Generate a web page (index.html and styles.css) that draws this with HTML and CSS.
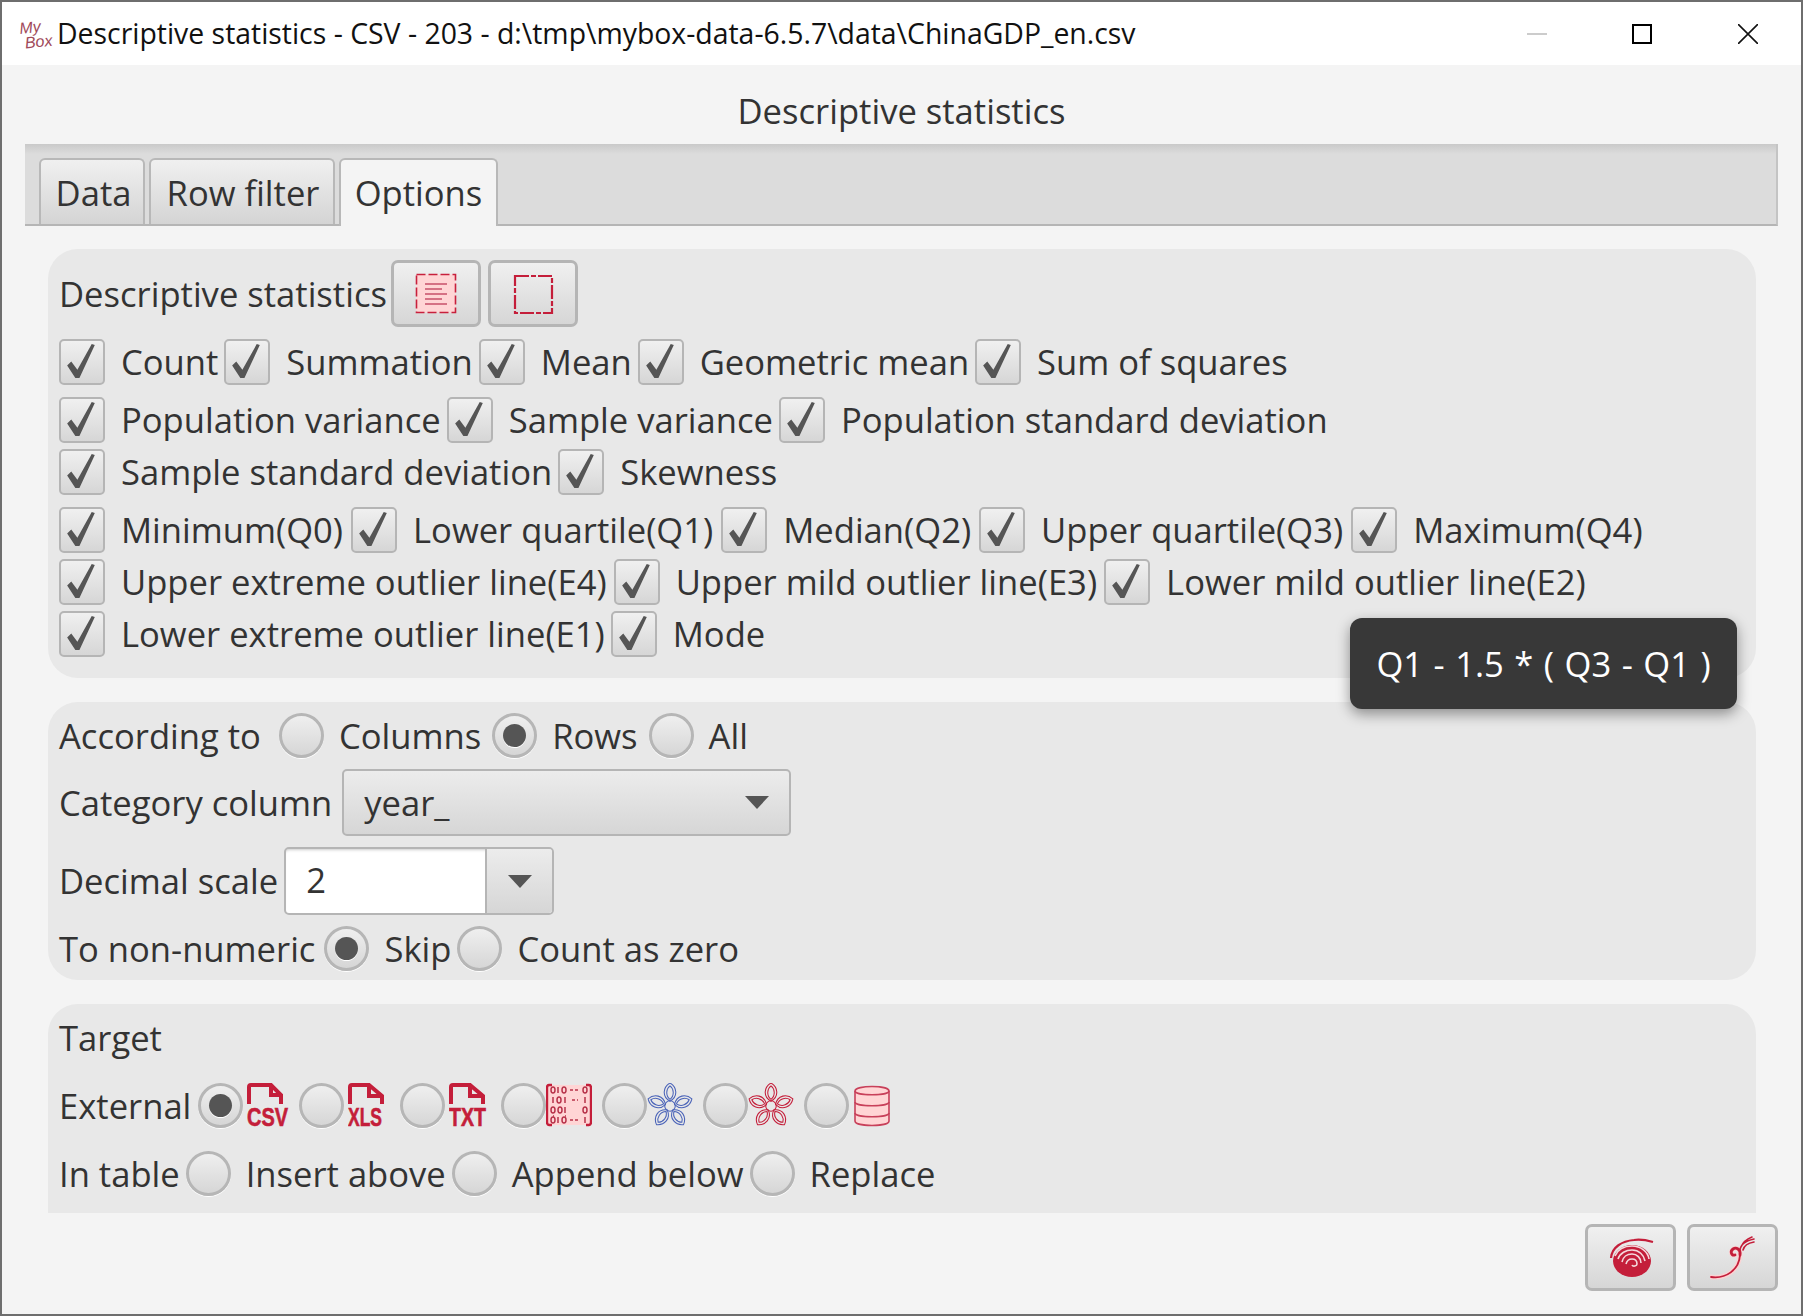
FILE: index.html
```html
<!DOCTYPE html>
<html>
<head>
    <title>Descriptive statistics</title>
    <link rel="stylesheet" href="styles.css">
</head>
<body>
<div class="window">
    <svg width="0" height="0" class="defs">
        <defs>
            <g id="petal">
                <path d="M0 -5 C-9 -10 -7 -20 0 -24 C7 -20 9 -10 0 -5Z"/>
                <path d="M0 -7 C-5 -11 -4 -18 0 -21 C4 -18 5 -11 0 -7Z"/>
            </g>
            <g id="flower">
                <use href="#petal"/>
                <use href="#petal" transform="rotate(72)"/>
                <use href="#petal" transform="rotate(144)"/>
                <use href="#petal" transform="rotate(216)"/>
                <use href="#petal" transform="rotate(288)"/>
                <circle r="5.5"/>
            </g>
            <g id="check">
                <path d="M6 24 L10 20 L16 28 L30 3 L33 4 L18 36 L14 36 Z" fill="#555"/>
            </g>
        </defs>
    </svg>

    <div class="titlebar">
        <div class="app-logo"><span>My</span><span class="box-word">Box</span></div>
        <div class="app-title">Descriptive statistics - CSV - 203 - d:\tmp\mybox-data-6.5.7\data\ChinaGDP_en.csv</div>
        <div class="win-btns">
            <span class="win-min"></span>
            <span class="win-max"></span>
            <svg class="win-close" width="20" height="20" viewBox="0 0 20 20"><path d="M0 0L20 20M20 0L0 20" stroke="#111" stroke-width="1.6"/></svg>
        </div>
    </div>

    <div class="page-title">Descriptive statistics</div>

    <div class="tabbar">
        <div class="tab tab-data">Data</div>
        <div class="tab tab-filter">Row filter</div>
        <div class="tab tab-active">Options</div>
    </div>

    <div class="content">
        <div class="section sec-stats">
            <div class="row stats-head">
                <span class="lbl">Descriptive statistics</span>
                <button class="tool-btn">
                    <svg width="42" height="42" viewBox="0 0 42 42">
                        <rect x="1.5" y="1.5" width="39" height="38" fill="#ffd5d5" stroke="#c8203c" stroke-width="1.6" stroke-dasharray="9 3"/>
                        <path d="M10 11H32M10 16H27M10 21H32M10 26H27M10 31H32" stroke="#c8506a" stroke-width="1.5"/>
                    </svg>
                </button>
                <button class="tool-btn">
                    <svg width="42" height="42" viewBox="0 0 42 42">
                        <rect x="3" y="3" width="37" height="37" fill="none" stroke="#c41e3a" stroke-width="2.2" stroke-dasharray="14 2 5 2"/>
                    </svg>
                </button>
            </div>

            <div class="row row-chk gap-12">
                <label class="chk"><svg class="cb" viewBox="0 0 41 41"><use href="#check"/></svg>Count</label>
                <label class="chk"><svg class="cb" viewBox="0 0 41 41"><use href="#check"/></svg>Summation</label>
                <label class="chk"><svg class="cb" viewBox="0 0 41 41"><use href="#check"/></svg>Mean</label>
                <label class="chk"><svg class="cb" viewBox="0 0 41 41"><use href="#check"/></svg>Geometric mean</label>
                <label class="chk"><svg class="cb" viewBox="0 0 41 41"><use href="#check"/></svg>Sum of squares</label>
            </div>
            <div class="row row-chk gap-12">
                <label class="chk"><svg class="cb" viewBox="0 0 41 41"><use href="#check"/></svg>Population variance</label>
                <label class="chk"><svg class="cb" viewBox="0 0 41 41"><use href="#check"/></svg>Sample variance</label>
                <label class="chk"><svg class="cb" viewBox="0 0 41 41"><use href="#check"/></svg>Population standard deviation</label>
            </div>
            <div class="row row-chk gap-6">
                <label class="chk"><svg class="cb" viewBox="0 0 41 41"><use href="#check"/></svg>Sample standard deviation</label>
                <label class="chk"><svg class="cb" viewBox="0 0 41 41"><use href="#check"/></svg>Skewness</label>
            </div>
            <div class="row row-chk row-quart gap-12">
                <label class="chk"><svg class="cb" viewBox="0 0 41 41"><use href="#check"/></svg>Minimum(Q0)</label>
                <label class="chk"><svg class="cb" viewBox="0 0 41 41"><use href="#check"/></svg>Lower quartile(Q1)</label>
                <label class="chk"><svg class="cb" viewBox="0 0 41 41"><use href="#check"/></svg>Median(Q2)</label>
                <label class="chk"><svg class="cb" viewBox="0 0 41 41"><use href="#check"/></svg>Upper quartile(Q3)</label>
                <label class="chk"><svg class="cb" viewBox="0 0 41 41"><use href="#check"/></svg>Maximum(Q4)</label>
            </div>
            <div class="row row-chk row-outlier gap-6">
                <label class="chk"><svg class="cb" viewBox="0 0 41 41"><use href="#check"/></svg>Upper extreme outlier line(E4)</label>
                <label class="chk"><svg class="cb" viewBox="0 0 41 41"><use href="#check"/></svg>Upper mild outlier line(E3)</label>
                <label class="chk"><svg class="cb" viewBox="0 0 41 41"><use href="#check"/></svg>Lower mild outlier line(E2)</label>
            </div>
            <div class="row row-chk gap-6">
                <label class="chk"><svg class="cb" viewBox="0 0 41 41"><use href="#check"/></svg>Lower extreme outlier line(E1)</label>
                <label class="chk"><svg class="cb" viewBox="0 0 41 41"><use href="#check"/></svg>Mode</label>
            </div>
        </div>

        <div class="section sec-options">
            <div class="row row-wide">
                <span class="lbl lbl-according">According to</span>
                <label class="rad"><span class="radio"></span>Columns</label>
                <label class="rad"><span class="radio on"></span>Rows</label>
                <label class="rad"><span class="radio"></span>All</label>
            </div>
            <div class="row gap-11">
                <span class="lbl">Category column</span>
                <div class="combo"><span>year_</span><i class="arrow"></i></div>
            </div>
            <div class="row gap-11">
                <span class="lbl">Decimal scale</span>
                <div class="spinner"><span class="spin-val">2</span><span class="spin-btn"><i class="arrow"></i></span></div>
            </div>
            <div class="row gap-11">
                <span class="lbl lbl-nonnum">To non-numeric</span>
                <label class="rad"><span class="radio on"></span>Skip</label>
                <label class="rad"><span class="radio"></span>Count as zero</label>
            </div>
        </div>

        <div class="section sec-target">
            <div class="lbl target-head">Target</div>
            <div class="row row-ext">
                <span class="lbl">External</span>
                <div class="fmts">
                    <div class="fmt">
                        <span class="radio on"></span>
                        <svg class="file-icon" width="56" height="50" viewBox="0 0 56 50">
                            <path d="M2 21V4Q2 2 4 2H24L34 12V21M24 3V12H33" fill="none" stroke="#c41e3a" stroke-width="4"/>
                            <text x="0" y="43" class="file-word" textLength="41" lengthAdjust="spacingAndGlyphs">CSV</text>
                        </svg>
                    </div>
                    <div class="fmt">
                        <span class="radio"></span>
                        <svg class="file-icon" width="56" height="50" viewBox="0 0 56 50">
                            <path d="M2 21V4Q2 2 4 2H21L34 13V21M21 3V13H33" fill="none" stroke="#c41e3a" stroke-width="4"/>
                            <text x="0" y="43" class="file-word" textLength="34" lengthAdjust="spacingAndGlyphs">XLS</text>
                        </svg>
                    </div>
                    <div class="fmt">
                        <span class="radio"></span>
                        <svg class="file-icon" width="56" height="50" viewBox="0 0 56 50">
                            <path d="M2 21V4Q2 2 4 2H21L34 13V21M21 3V13H33" fill="none" stroke="#c41e3a" stroke-width="4"/>
                            <text x="0" y="43" class="file-word" textLength="37" lengthAdjust="spacingAndGlyphs">TXT</text>
                        </svg>
                    </div>
                    <div class="fmt">
                        <span class="radio"></span>
                        <svg class="no-gap" width="46" height="44" viewBox="0 0 46 44">
                            <rect x="2" y="2" width="42" height="40" rx="4" fill="#ffd5d5"/>
                            <path d="M6 2H3Q1 2 1 5V39Q1 42 3 42H6M40 2H43Q45 2 45 5V39Q45 42 43 42H40" fill="none" stroke="#c41e3a" stroke-width="2.4"/>
                            <g fill="none" stroke="#b8334a" stroke-width="1.5">
                                <ellipse cx="7" cy="7" rx="2" ry="3"/><ellipse cx="18" cy="7" rx="2" ry="3"/><ellipse cx="39" cy="7" rx="2" ry="3"/>
                                <ellipse cx="13" cy="17" rx="2" ry="3"/><ellipse cx="39" cy="27" rx="2" ry="3"/>
                                <ellipse cx="7" cy="27" rx="2" ry="3"/><ellipse cx="14" cy="27" rx="2" ry="3"/>
                                <ellipse cx="7" cy="37" rx="2" ry="3"/><ellipse cx="18" cy="37" rx="2" ry="3"/>
                                <path d="M12 4v6M7 14v6M19 14v6M19 24v6M12 34v6M39 14v6M39 34v6"/>
                                <path d="M24 7h10M26 17h6M24 37h10M7 33h1M19 33h1" stroke-dasharray="3 2"/>
                            </g>
                        </svg>
                    </div>
                    <div class="fmt">
                        <span class="radio"></span>
                        <svg class="no-gap" width="46" height="46" viewBox="-24 -24 48 48"><use href="#flower" class="flower-blue"/></svg>
                    </div>
                    <div class="fmt">
                        <span class="radio"></span>
                        <svg class="no-gap" width="46" height="46" viewBox="-24 -24 48 48"><use href="#flower" class="flower-red"/></svg>
                    </div>
                    <div class="fmt">
                        <span class="radio"></span>
                        <svg class="db-icon" width="36" height="44" viewBox="0 0 36 44">
                            <path d="M1 7C1 1 35 1 35 7V37C35 43 1 43 1 37Z" fill="#ffd5d5" stroke="#c8405a" stroke-width="1.6"/>
                            <path d="M1 7C1 12 35 12 35 7M1 18C1 23 35 23 35 18M1 29C1 34 35 34 35 29" fill="none" stroke="#c8405a" stroke-width="1.6"/>
                        </svg>
                    </div>
                </div>
            </div>
            <div class="row gap-23">
                <span class="lbl">In table</span>
                <label class="rad"><span class="radio"></span>Insert above</label>
                <label class="rad"><span class="radio"></span>Append below</label>
                <label class="rad"><span class="radio"></span>Replace</label>
            </div>
        </div>
    </div>

    <div class="footer">
        <button class="foot-btn">
            <svg width="46" height="40" viewBox="0 0 46 40">
                <ellipse cx="24" cy="23" rx="19" ry="16" fill="#c41e3a"/>
                <g fill="none" stroke="#f4d9dc" stroke-width="1.6">
                    <path d="M7 18C10 11 17 8 24 8C33 8 40 14 41 21"/>
                    <path d="M10 21C12 15 18 12 24 12C31 12 36 17 37 23"/>
                    <path d="M14 24C15 19 19 16 24 16C29 16 33 20 33 25"/>
                    <path d="M18 26C19 22 21 21 24 21C27 21 29 23 29 26C29 28 25 29 24 27"/>
                </g>
                <path d="M3 20C4 9 14 3 26 2C32 1 38 2 45 4" fill="none" stroke="#c41e3a" stroke-width="2.2"/>
            </svg>
        </button>
        <button class="foot-btn">
            <svg width="46" height="44" viewBox="0 0 46 44">
                <g fill="none" stroke-linecap="round">
                    <path d="M1 41C16 43 29 34 30 19C31 13 26 11 23 13C20 15 21 20 25 19" stroke="#fbd3d3" stroke-width="4.5"/>
                    <path d="M1 41C16 43 29 34 30 19" stroke="#c41e3a" stroke-width="1.8"/>
                    <path d="M30 19C31 13 26 11 23 13C20 15 21 20 25 19" stroke="#c41e3a" stroke-width="2.8"/>
                    <path d="M30 15C30 9 35 5 44 3M33 14C34 10 38 7 44 6M31 11C33 6 37 3 42 1" stroke="#c41e3a" stroke-width="1.6"/>
                </g>
            </svg>
        </button>
    </div>

    <div class="tooltip">Q1 - 1.5 * ( Q3 - Q1 )</div>
</div>
</body>
</html>
```

FILE: styles.css
```css
html, body {
    margin: 0;
    padding: 0;
    height: 100%;
}
body {
    font-family: "Open Sans", "Noto Sans", sans-serif;
    color: #333;
    font-size: 34.6px;
    line-height: 44px;
}
.defs {
    position: absolute;
}
.window {
    position: relative;
    box-sizing: border-box;
    width: 1803px;
    height: 1316px;
    border: 2px solid #6e6e6e;
    background: #f4f4f4;
    overflow: hidden;
}

/* title bar */
.titlebar {
    height: 63px;
    background: #fff;
    display: flex;
    align-items: center;
    padding-left: 18px;
    color: #111;
}
.app-logo {
    width: 37px;
    font-family: "Liberation Sans", sans-serif;
    font-style: italic;
    font-size: 16px;
    line-height: 15px;
    color: #a04a5a;
    transform: rotate(-6deg);
}
.app-logo span {
    display: block;
}
.app-logo .box-word {
    padding-left: 4px;
}
.app-title {
    font-size: 28.4px;
    white-space: nowrap;
    padding-bottom: 2px;
}
.win-btns {
    margin-left: auto;
    display: flex;
    align-items: center;
    padding-right: 43px;
}
.win-min {
    width: 20px;
    height: 2px;
    background: #ccc;
}
.win-max {
    box-sizing: border-box;
    width: 20px;
    height: 20px;
    border: 2px solid #000;
    margin-left: 85px;
}
.win-close {
    margin-left: 86px;
}

.page-title {
    height: 80px;
    line-height: 92px;
    text-align: center;
}

/* tabs */
.tabbar {
    box-sizing: border-box;
    height: 82px;
    margin: -1px 23px 0 23px;
    padding: 14px 0 0 14px;
    display: flex;
    gap: 4px;
    background: linear-gradient(#c9c9c9, #dcdcdc 10px);
    border-bottom: 2px solid #b5b5b5;
    border-right: 2px solid #c4c4c4;
}
.tab {
    box-sizing: border-box;
    height: 66px;
    border: 2px solid #b8b8b8;
    border-bottom: 0;
    border-radius: 6px 6px 0 0;
    background: linear-gradient(#f0f0f0, #d4d4d4);
    text-align: center;
    line-height: 66px;
}
.tab-data {
    width: 106px;
    padding-left: 3px;
}
.tab-filter {
    width: 186px;
    padding-left: 2px;
}
.tab-active {
    width: 159px;
    height: 68px;
    background: #f4f4f4;
}

/* sections */
.content {
    width: 1708px;
    padding: 23px 0 0 46px;
}
.section {
    background: #e8e8e8;
    border-radius: 30px;
    padding: 11px 11px 0;
    margin-bottom: 24px;
    box-sizing: border-box;
}
.sec-stats {
    height: 429px;
}
.sec-options {
    height: 278px;
}
.sec-target {
    height: 209px;
    margin-bottom: 0;
    border-radius: 30px 30px 0 0;
    overflow: hidden;
}
.row {
    display: flex;
    align-items: center;
    white-space: nowrap;
    gap: 6px;
}
.row-quart {
    gap: 8px;
}
.row-outlier {
    gap: 7px;
}
.row-wide {
    gap: 11px;
}
.row-ext {
    gap: 7px;
}
.gap-6 { margin-top: 6px; }
.gap-11 { margin-top: 11px; }
.gap-12 { margin-top: 12px; }
.gap-23 { margin-top: 23px; }
.stats-head {
    gap: 4px;
}
.stats-head .tool-btn + .tool-btn {
    margin-left: 3px;
}
.target-head {
    line-height: 46px;
    margin: 0 0 22px;
}
.lbl-according {
    margin-right: 7px;
}
.lbl-nonnum {
    margin-right: 3px;
}

/* controls */
.chk, .rad {
    display: flex;
    align-items: center;
    gap: 15px;
}
.chk {
    height: 46px;
    gap: 16px;
}
.cb {
    box-sizing: border-box;
    width: 46px;
    height: 46px;
    border: 2.5px solid #b5b5b5;
    border-radius: 5px;
    background: linear-gradient(#f0f0f0, #d6d6d6);
}
.rad {
    height: 45px;
}
.radio {
    box-sizing: border-box;
    flex: none;
    width: 45px;
    height: 45px;
    border: 3px solid #b6b6b6;
    border-radius: 50%;
    background: linear-gradient(#efefef, #d6d6d6);
    box-shadow: 0 1px 0 #fff;
    display: flex;
    align-items: center;
    justify-content: center;
}
.radio.on::after {
    content: "";
    width: 23px;
    height: 23px;
    border-radius: 50%;
    background: #555;
    box-shadow: 0 1px 0 #fff;
}
.tool-btn, .foot-btn {
    box-sizing: border-box;
    padding: 0;
    border: 3px solid #b5b5b5;
    border-radius: 7px;
    background: linear-gradient(#f0f0f0, #d6d6d6);
    display: flex;
    align-items: center;
    justify-content: center;
}
.tool-btn {
    width: 90px;
    height: 67px;
}
.combo {
    box-sizing: border-box;
    width: 449px;
    height: 67px;
    margin-left: 4px;
    border: 2px solid #b5b5b5;
    border-radius: 5px;
    background: linear-gradient(#ececec, #d6d6d6);
    display: flex;
    align-items: center;
    justify-content: space-between;
    padding: 0 20px 0 20px;
}
.arrow {
    display: block;
    width: 0;
    height: 0;
    border-left: 12px solid transparent;
    border-right: 12px solid transparent;
    border-top: 13px solid #555;
}
.spinner {
    box-sizing: border-box;
    width: 270px;
    height: 68px;
    border: 2px solid #b5b5b5;
    border-radius: 5px;
    background: #fff;
    box-shadow: inset 0 3px 3px -2px #ccc;
    display: flex;
    overflow: hidden;
}
.spin-val {
    flex: 1;
    line-height: 62px;
    padding-left: 20px;
}
.spin-btn {
    width: 65px;
    border-left: 2px solid #b5b5b5;
    background: linear-gradient(#ececec, #d6d6d6);
    display: flex;
    align-items: center;
    justify-content: center;
}

/* target format choices */
.fmts {
    display: flex;
}
.fmt {
    display: flex;
    align-items: flex-start;
    gap: 4px;
    width: 101px;
    height: 45px;
}
.fmt .no-gap {
    margin-left: -4px;
}
.fmt .db-icon {
    margin: 1px 0 0 1px;
}
.fmt .file-icon {
    flex: none;
    margin-right: -14px;
}
.file-word {
    font-family: "Liberation Sans", sans-serif;
    font-weight: bold;
    font-size: 25px;
    fill: #c41e3a;
    stroke: #c41e3a;
    stroke-width: 0.6;
}
.flower-blue {
    fill: none;
    stroke: #4a63b8;
    stroke-width: 1.1;
}
.flower-red {
    fill: none;
    stroke: #c41e3a;
    stroke-width: 1.1;
}

/* bottom buttons */
.footer {
    display: flex;
    justify-content: flex-end;
    gap: 11px;
    padding: 11px 23px 0 0;
}
.foot-btn {
    width: 91px;
    height: 67px;
}

.tooltip {
    position: absolute;
    left: 1348px;
    top: 616px;
    box-sizing: border-box;
    width: 387px;
    height: 91px;
    border-radius: 12px;
    background: #383838;
    color: #fff;
    text-align: center;
    line-height: 92px;
    word-spacing: 1.5px;
    box-shadow: 0 5px 14px rgba(0, 0, 0, 0.4);
}
```
